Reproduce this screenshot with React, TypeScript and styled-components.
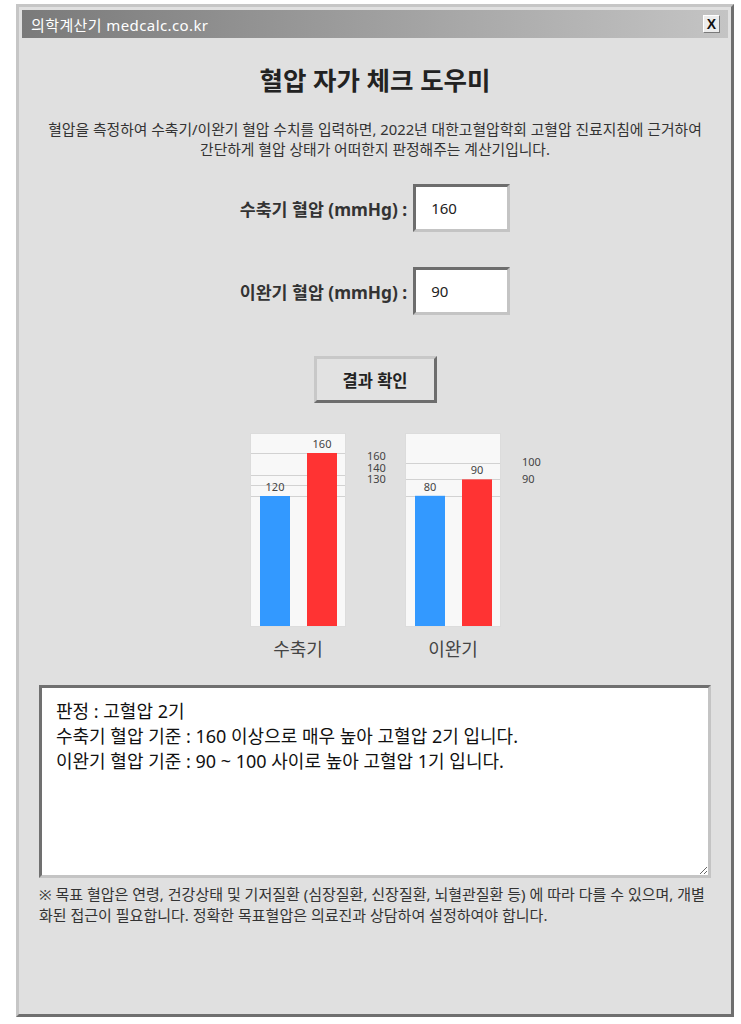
import styled, { createGlobalStyle } from "styled-components";

const GlobalStyle = createGlobalStyle`
  html, body {
    margin: 0;
    padding: 0;
    background: #ffffff;
  }
  body {
    font-family: "Noto Sans", "Noto Sans CJK KR", sans-serif;
  }
`;

interface Mark {
  text: string;
  y: number;
}

interface ChartSpec {
  caption: string;
  base: number;
  scale: number;
  normal: number;
  value: number;
  lines: number[];
  marks: Mark[];
}

const charts: ChartSpec[] = [
  {
    caption: "수축기",
    base: 192,
    scale: 1.075,
    normal: 120,
    value: 160,
    lines: [160, 140, 130, 120],
    marks: [
      { text: "160", y: 27 },
      { text: "140", y: 39 },
      { text: "130", y: 50 },
    ],
  },
  {
    caption: "이완기",
    base: 194,
    scale: 1.64,
    normal: 80,
    value: 90,
    lines: [100, 90, 80],
    marks: [
      { text: "100", y: 33 },
      { text: "90", y: 50 },
    ],
  },
];

const BOX_W = 96;
const BOX_H = 194;

function Chart({ spec }: { spec: ChartSpec }) {
  const toY = (v: number) => spec.base - v * spec.scale;
  const normalY = toY(spec.normal);
  const valueY = toY(spec.value);
  return (
    <ChartGroup>
      <svg width={155} height={BOX_H} viewBox={`0 0 155 ${BOX_H}`}>
        <rect x={0.5} y={0.5} width={BOX_W - 1} height={BOX_H - 1} fill="#f8f8f8" stroke="#dcdcdc" />
        {spec.lines.map((v) => (
          <line
            key={v}
            x1={1}
            x2={BOX_W - 1}
            y1={Math.round(toY(v)) + 0.5}
            y2={Math.round(toY(v)) + 0.5}
            stroke="#d2d2d2"
          />
        ))}
        <rect x={10} y={normalY} width={30} height={BOX_H - 1 - normalY} fill="#3399ff" />
        <rect x={57} y={valueY} width={30} height={BOX_H - 1 - valueY} fill="#ff3333" />
        <ChartText x={25} y={normalY - 5} textAnchor="middle">
          {spec.normal}
        </ChartText>
        <ChartText x={72} y={valueY - 5} textAnchor="middle">
          {spec.value}
        </ChartText>
        {spec.marks.map((m) => (
          <ChartText key={m.text} x={117} y={m.y}>
            {m.text}
          </ChartText>
        ))}
      </svg>
      <Caption>{spec.caption}</Caption>
    </ChartGroup>
  );
}

export default function App() {
  return (
    <>
      <GlobalStyle />
      <Window>
        <TitleBar>
          <TitleText>의학계산기 medcalc.co.kr</TitleText>
          <CloseButton>X</CloseButton>
        </TitleBar>
        <Content>
          <Heading>혈압 자가 체크 도우미</Heading>
          <Description>
            혈압을 측정하여 수축기/이완기 혈압 수치를 입력하면, 2022년 대한고혈압학회 고혈압 진료지침에 근거하여
            <br />
            간단하게 혈압 상태가 어떠한지 판정해주는 계산기입니다.
          </Description>
          <Form>
            <FieldLabel>수축기 혈압 (mmHg) :</FieldLabel>
            <NumberInput defaultValue="160" />
            <FieldLabel>이완기 혈압 (mmHg) :</FieldLabel>
            <NumberInput defaultValue="90" />
          </Form>
          <SubmitButton>결과 확인</SubmitButton>
          <ChartRow>
            {charts.map((c) => (
              <Chart key={c.caption} spec={c} />
            ))}
          </ChartRow>
          <ResultBox
            defaultValue={
              "판정 : 고혈압 2기\n수축기 혈압 기준 : 160 이상으로 매우 높아 고혈압 2기 입니다.\n이완기 혈압 기준 : 90 ~ 100 사이로 높아 고혈압 1기 입니다."
            }
          />
          <Note>
            ※ 목표 혈압은 연령, 건강상태 및 기저질환 (심장질환, 신장질환, 뇌혈관질환 등) 에 따라 다를 수 있으며, 개별
            <br />
            화된 접근이 필요합니다. 정확한 목표혈압은 의료진과 상담하여 설정하여야 합니다.
          </Note>
        </Content>
      </Window>
    </>
  );
}

const Window = styled.div`
  box-sizing: border-box;
  width: 718px;
  height: 1013px;
  margin: 4px 0 0 16px;
  padding: 3px;
  background: #e0e0e0;
  border: 3px solid;
  border-color: #c6c6c6 #6f6f6f #6f6f6f #c6c6c6;
  display: flex;
  flex-direction: column;
`;

const TitleBar = styled.div`
  height: 28px;
  flex-shrink: 0;
  display: flex;
  align-items: center;
  justify-content: space-between;
  padding: 0 8px 0 9px;
  background: linear-gradient(to right, #7a7a7a, #c4c4c4);
`;

const TitleText = styled.span`
  color: #ffffff;
  font-size: 15px;
  letter-spacing: 0.4px;
`;

const CloseButton = styled.button`
  box-sizing: border-box;
  width: 17px;
  height: 18px;
  padding: 0;
  border: 1px solid;
  border-color: #ffffff #7a7a7a #7a7a7a #ffffff;
  background: #ececec;
  color: #111;
  font-family: "Liberation Sans", sans-serif;
  font-size: 14px;
  font-weight: 700;
  line-height: 16px;
  cursor: pointer;
`;

const Content = styled.div`
  display: flex;
  flex-direction: column;
  align-items: center;
  padding: 0 17px;
`;

const Heading = styled.h1`
  margin: 27px 0 0;
  font-size: 25.5px;
  line-height: 30px;
  font-weight: 700;
  color: #222;
`;

const Description = styled.p`
  margin: 24px 0 0;
  font-size: 14.8px;
  line-height: 20px;
  text-align: center;
  color: #333;
  white-space: nowrap;
`;

const Form = styled.div`
  margin-top: 25px;
  display: grid;
  grid-template-columns: auto 97px;
  column-gap: 6px;
  row-gap: 35px;
  align-items: center;
`;

const FieldLabel = styled.label`
  justify-self: end;
  font-size: 17.3px;
  font-weight: 700;
  color: #333;
`;

const NumberInput = styled.input`
  box-sizing: border-box;
  width: 97px;
  height: 48px;
  padding: 0 0 0 15px;
  border: 3px solid;
  border-color: #6d6d6d #c4c4c4 #c4c4c4 #6d6d6d;
  background: #ffffff;
  font-family: "Noto Sans", sans-serif;
  font-size: 15px;
  color: #222;
  outline: none;
`;

const SubmitButton = styled.button`
  box-sizing: border-box;
  margin-top: 41px;
  width: 123px;
  height: 47px;
  border: 3px solid;
  border-color: #c8c8c8 #6d6d6d #6d6d6d #c8c8c8;
  background: #e2e2e2;
  font-family: "Noto Sans", "Noto Sans CJK KR", sans-serif;
  font-size: 16.5px;
  font-weight: 700;
  color: #222;
  cursor: pointer;
`;

const ChartRow = styled.div`
  align-self: stretch;
  margin-top: 30px;
  padding-left: 211px;
  display: flex;
`;

const ChartGroup = styled.div`
  width: 155px;
  display: flex;
  flex-direction: column;

  svg {
    display: block;
  }
`;

const ChartText = styled.text`
  font-family: "Noto Sans", sans-serif;
  font-size: 11px;
  fill: #444;
`;

const Caption = styled.div`
  width: ${BOX_W}px;
  margin-top: 11px;
  text-align: center;
  font-size: 18px;
  line-height: 22px;
  color: #444;
`;

const ResultBox = styled.textarea`
  box-sizing: border-box;
  margin-top: 25px;
  width: 100%;
  height: 193px;
  padding: 11px 14px;
  border: 3px solid;
  border-color: #707070 #c4c4c4 #c4c4c4 #707070;
  background: #ffffff;
  font-family: "Noto Sans", "Noto Sans CJK KR", sans-serif;
  font-size: 18px;
  line-height: 25px;
  color: #111;
  outline: none;
`;

const Note = styled.p`
  align-self: stretch;
  margin: 6px 0 0;
  font-size: 15px;
  line-height: 21px;
  color: #333;
  white-space: nowrap;
`;
